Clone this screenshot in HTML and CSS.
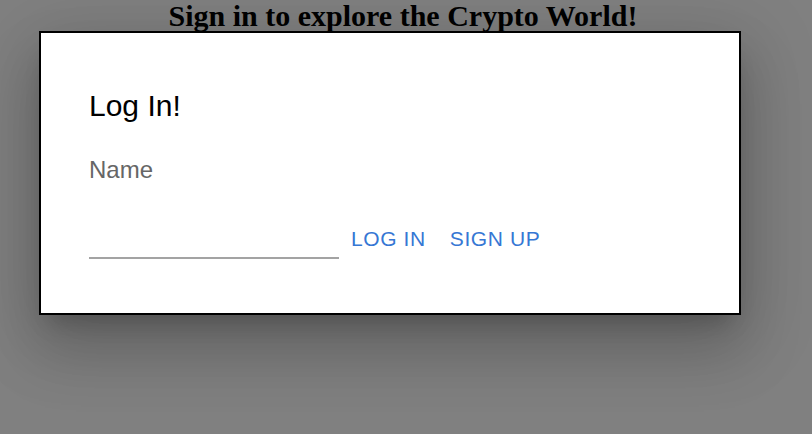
FILE: index.html
```html
<!DOCTYPE html>
<html>
<head>
<meta charset="utf-8">
<link rel="stylesheet" href="styles.css">
</head>
<body>
<h2 class="page-title">Sign in to explore the Crypto World!</h2>
<div class="dialog">
  <div class="dialog-title">Log In!</div>
  <div class="field-label">Name</div>
  <div class="form-row">
    <div class="text-input"><input type="text" aria-label="Name"></div>
    <button class="text-btn">Log In</button>
    <button class="text-btn">Sign Up</button>
  </div>
</div>
</body>
</html>
```
FILE: styles.css
```css
html, body {
  margin: 0;
  padding: 0;
  background: #808080;
  height: 100%;
  overflow: hidden;
}
.page-title {
  margin: 0;
  padding-right: 6px;
  font-family: "Liberation Serif", "Times New Roman", serif;
  font-weight: bold;
  font-size: 30px;
  line-height: 31px;
  text-align: center;
  color: #000;
}
.dialog {
  margin-left: 39px;
  width: 702px;
  height: 284px;
  box-sizing: border-box;
  border: 2px solid #000;
  background: #fff;
  padding: 55px 0 0 48px;
  font-family: "Liberation Sans", Arial, sans-serif;
  box-shadow: 0 16px 22px -10px rgba(0,0,0,0.2), 0 36px 57px 5px rgba(0,0,0,0.14), 0 14px 69px 12px rgba(0,0,0,0.12);
}
.dialog-title {
  font-size: 30px;
  line-height: 36px;
  color: #000;
}
.field-label {
  margin-top: 32px;
  font-size: 24px;
  line-height: 28px;
  color: #666;
}
.form-row {
  margin-top: 28px;
  display: flex;
  align-items: flex-start;
}
.text-input {
  width: 250px;
  height: 47px;
  box-sizing: border-box;
  border-bottom: 2px solid #a3a3a3;
}
.text-input input {
  border: 0;
  outline: 0;
  width: 100%;
  height: 100%;
  padding: 0;
  background: transparent;
  font: 24px "Liberation Sans", Arial, sans-serif;
}
.text-btn {
  border: 0;
  background: transparent;
  padding: 9px 12px;
  font-family: "Liberation Sans", Arial, sans-serif;
  font-size: 21px;
  line-height: 36px;
  letter-spacing: 0.6px;
  text-transform: uppercase;
  color: #3677d4;
  cursor: pointer;
}
```
